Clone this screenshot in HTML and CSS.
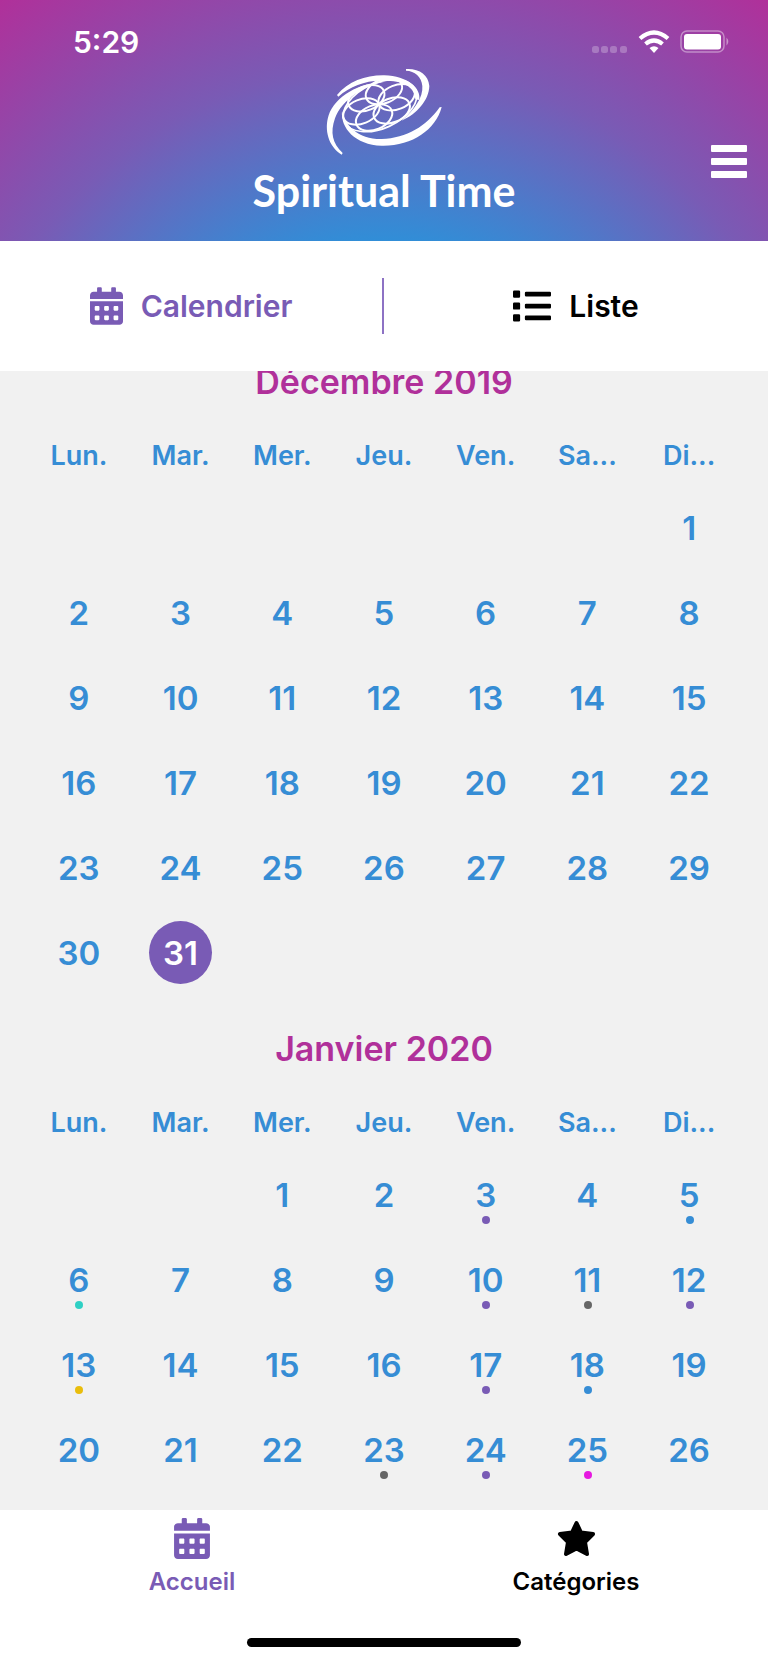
FILE: index.html
```html
<!DOCTYPE html>
<html lang="fr">
<head>
<meta charset="utf-8">
<meta name="viewport" content="width=device-width, initial-scale=1">
<title>Spiritual Time</title>
<link rel="stylesheet" href="styles.css">
</head>
<body>
<svg class="sprite" aria-hidden="true">
  <symbol id="calendar" viewBox="0 0 448 512"><path d="M0 464c0 26.500 21.500 48 48 48h352c26.500 0 48-21.500 48-48V192H0v272zm320-196c0-6.600 5.400-12 12-12h40c6.600 0 12 5.400 12 12v40c0 6.600-5.400 12-12 12h-40c-6.600 0-12-5.400-12-12v-40zm0 128c0-6.600 5.400-12 12-12h40c6.600 0 12 5.400 12 12v40c0 6.600-5.400 12-12 12h-40c-6.600 0-12-5.400-12-12v-40zM192 268c0-6.600 5.400-12 12-12h40c6.600 0 12 5.400 12 12v40c0 6.600-5.400 12-12 12h-40c-6.600 0-12-5.400-12-12v-40zm0 128c0-6.600 5.400-12 12-12h40c6.600 0 12 5.400 12 12v40c0 6.600-5.400 12-12 12h-40c-6.600 0-12-5.400-12-12v-40zM64 268c0-6.600 5.400-12 12-12h40c6.600 0 12 5.400 12 12v40c0 6.600-5.400 12-12 12H76c-6.600 0-12-5.400-12-12v-40zm0 128c0-6.600 5.400-12 12-12h40c6.600 0 12 5.400 12 12v40c0 6.600-5.400 12-12 12H76c-6.600 0-12-5.400-12-12v-40zM400 64h-48V16c0-8.800-7.200-16-16-16h-32c-8.800 0-16 7.200-16 16v48H160V16c0-8.800-7.200-16-16-16h-32c-8.800 0-16 7.200-16 16v48H48C21.500 64 0 85.500 0 112v48h448v-48c0-26.500-21.500-48-48-48z"/></symbol>
</svg>

<header class="header">
  <div class="status">
    <span class="clock">5:29</span>
    <svg class="status-icons" viewBox="0 0 138 24" aria-hidden="true">
      <g fill="#fff" fill-opacity=".25">
        <rect x="1" y="16" width="7" height="7" rx="2.500"/><rect x="10" y="16" width="7" height="7" rx="2.500"/><rect x="19" y="16" width="7" height="7" rx="2.500"/><rect x="29" y="16" width="7" height="7" rx="2.500"/>
      </g>
      <g fill="none" stroke="#fff" stroke-width="4.200">
        <path d="M49 8.500Q63 -3.500 77 8.500"/><path d="M54.500 14Q63 7 71.500 14"/>
      </g>
      <path d="M58.500 18Q63 14.500 67.500 18L63 23Z" fill="#fff"/>
      <rect x="90" y="1" width="43" height="21" rx="6" fill="none" stroke="#fff" stroke-opacity=".4" stroke-width="1.500"/>
      <rect x="93" y="4" width="37" height="15.500" rx="3" fill="#fff"/>
      <path d="M135.500 7.500q3.500 4 0 8z" fill="#fff" fill-opacity=".45"/>
    </svg>
  </div>
  <div class="brand">
    <svg class="logo" viewBox="42 22 354 264" aria-hidden="true">
      <g fill="#fff">
        <path d="M78 103C112 62 165 43 220 44C290 47 331 82 325 118L313 116C312 82 280 59 222 61C170 57 120 75 82 108Z"/>
        <path d="M285 25C325 23 352 42 355 76C354 118 318 160 272 180C310 148 337 110 334 76C332 48 311 31 285 30Z"/>
        <path d="M392 139C374 208 302 257 212 255C132 252 88 202 93 150C101 194 142 236 212 235C288 233 346 196 386 140Z"/>
        <path d="M222 63C162 72 92 117 72 173C57 215 64 249 95 277L92 282C52 258 39 207 53 164C72 106 145 66 222 63Z"/>
      </g>
      <g fill="none" stroke="#fff" stroke-width="5">
        <ellipse cx="207" cy="135" rx="117" ry="68" transform="rotate(-24 207 135)"/>
      </g>
      <g class="flower" transform="translate(204 131) rotate(-22) scale(114 72)" fill="none" stroke="#fff">
        <circle cx=".5" cy="0" r=".5"/><circle cx=".25" cy=".433" r=".5"/><circle cx="-.25" cy=".433" r=".5"/><circle cx="-.5" cy="0" r=".5"/><circle cx="-.25" cy="-.433" r=".5"/><circle cx=".25" cy="-.433" r=".5"/>
      </g>
    </svg>
    <h1 class="name">Spiritual Time</h1>
  </div>
  <button class="menu" aria-label="Menu"><span class="bar"></span><span class="bar"></span><span class="bar"></span></button>
</header>

<nav class="views">
  <button class="view active"><svg class="icon-cal"><use href="#calendar"/></svg>Calendrier</button>
  <button class="view"><svg class="icon-list" viewBox="0 0 512 512"><path d="M80 368H16a16 16 0 0 0-16 16v64a16 16 0 0 0 16 16h64a16 16 0 0 0 16-16v-64a16 16 0 0 0-16-16zm0-320H16A16 16 0 0 0 0 64v64a16 16 0 0 0 16 16h64a16 16 0 0 0 16-16V64a16 16 0 0 0-16-16zm0 160H16a16 16 0 0 0-16 16v64a16 16 0 0 0 16 16h64a16 16 0 0 0 16-16v-64a16 16 0 0 0-16-16zm416 176H176a16 16 0 0 0-16 16v32a16 16 0 0 0 16 16h320a16 16 0 0 0 16-16v-32a16 16 0 0 0-16-16zm0-320H176a16 16 0 0 0-16 16v32a16 16 0 0 0 16 16h320a16 16 0 0 0 16-16V80a16 16 0 0 0-16-16zm0 160H176a16 16 0 0 0-16 16v32a16 16 0 0 0 16 16h320a16 16 0 0 0 16-16v-32a16 16 0 0 0-16-16z"/></svg>Liste</button>
</nav>

<main class="calendar">
  <table class="month scrolled">
    <caption>Décembre 2019</caption>
    <thead><tr><th>Lun.</th><th>Mar.</th><th>Mer.</th><th>Jeu.</th><th>Ven.</th><th>Sa...</th><th>Di...</th></tr></thead>
    <tbody>
      <tr><td></td><td></td><td></td><td></td><td></td><td></td><td><button class="day">1</button></td></tr>
      <tr><td><button class="day">2</button></td><td><button class="day">3</button></td><td><button class="day">4</button></td><td><button class="day">5</button></td><td><button class="day">6</button></td><td><button class="day">7</button></td><td><button class="day">8</button></td></tr>
      <tr><td><button class="day">9</button></td><td><button class="day">10</button></td><td><button class="day">11</button></td><td><button class="day">12</button></td><td><button class="day">13</button></td><td><button class="day">14</button></td><td><button class="day">15</button></td></tr>
      <tr><td><button class="day">16</button></td><td><button class="day">17</button></td><td><button class="day">18</button></td><td><button class="day">19</button></td><td><button class="day">20</button></td><td><button class="day">21</button></td><td><button class="day">22</button></td></tr>
      <tr><td><button class="day">23</button></td><td><button class="day">24</button></td><td><button class="day">25</button></td><td><button class="day">26</button></td><td><button class="day">27</button></td><td><button class="day">28</button></td><td><button class="day">29</button></td></tr>
      <tr><td><button class="day">30</button></td><td><button class="day selected">31</button></td><td></td><td></td><td></td><td></td><td></td></tr>
    </tbody>
  </table>
  <table class="month">
    <caption>Janvier 2020</caption>
    <thead><tr><th>Lun.</th><th>Mar.</th><th>Mer.</th><th>Jeu.</th><th>Ven.</th><th>Sa...</th><th>Di...</th></tr></thead>
    <tbody>
      <tr><td></td><td></td><td><button class="day">1</button></td><td><button class="day">2</button></td><td><button class="day dot violet">3</button></td><td><button class="day">4</button></td><td><button class="day dot blue">5</button></td></tr>
      <tr><td><button class="day dot teal">6</button></td><td><button class="day">7</button></td><td><button class="day">8</button></td><td><button class="day">9</button></td><td><button class="day dot violet">10</button></td><td><button class="day dot gray">11</button></td><td><button class="day dot violet">12</button></td></tr>
      <tr><td><button class="day dot yellow">13</button></td><td><button class="day">14</button></td><td><button class="day">15</button></td><td><button class="day">16</button></td><td><button class="day dot violet">17</button></td><td><button class="day dot blue">18</button></td><td><button class="day">19</button></td></tr>
      <tr><td><button class="day">20</button></td><td><button class="day">21</button></td><td><button class="day">22</button></td><td><button class="day dot gray">23</button></td><td><button class="day dot violet">24</button></td><td><button class="day dot pink">25</button></td><td><button class="day">26</button></td></tr>
    </tbody>
  </table>
</main>

<footer class="footer">
  <nav class="tabs">
    <a class="tab active" href="#accueil"><svg class="tab-icon"><use href="#calendar"/></svg>Accueil</a>
    <a class="tab" href="#categories"><svg class="tab-icon" viewBox="0 0 36 41"><path d="M18.500 5L23 14.500L35 16L27 24L29 36L18.500 30.500L8 36L10 24L2 16L14 14.500Z" fill="currentColor" stroke="currentColor" stroke-width="4" stroke-linejoin="round"/></svg>Catégories</a>
  </nav>
  <div class="home-bar"></div>
</footer>
</body>
</html>
```
FILE: styles.css
```css
* { box-sizing: border-box; }

body {
  margin: 0;
  min-height: 100vh;
  display: flex;
  flex-direction: column;
  background: #fff;
  color: #000;
  font-family: Inter, "Liberation Sans", sans-serif;
}

button {
  margin: 0;
  padding: 0;
  border: 0;
  background: none;
  color: inherit;
  font: inherit;
}

svg { display: block; fill: currentColor; overflow: visible; }
.sprite { position: absolute; width: 0; height: 0; }

.header {
  position: relative;
  height: 241px;
  color: #fff;
  background: radial-gradient(circle at 50% 500px, #2f8fd8 255px, #795bb5 434px, #b0309a 630px);
}

.status {
  display: flex;
  justify-content: space-between;
  align-items: center;
  height: 66px;
  padding: 18px 39px 0 73px;
}
.clock { font-size: 30px; line-height: 48px; font-weight: 600; }
.status-icons { width: 138px; height: 24px; }

.brand { display: flex; flex-direction: column; align-items: center; padding-top: 2px; }
.logo { width: 118px; height: 88px; }
.flower circle { stroke-width: 2px; vector-effect: non-scaling-stroke; }
.name {
  margin: 10px 0 0;
  font-family: Lato, sans-serif;
  font-size: 43px;
  line-height: 50px;
  font-weight: 700;
}

.menu {
  position: absolute;
  right: 21px;
  top: 145px;
  display: flex;
  flex-direction: column;
  gap: 6px;
  width: 36px;
}
.bar { height: 7px; border-radius: 1px; background: #fff; }

.views {
  display: grid;
  grid-template-columns: 1fr 1fr;
  align-items: center;
  height: 130px;
}
.view {
  display: flex;
  align-items: center;
  justify-content: center;
  gap: 18px;
  height: 56px;
  font-size: 30px;
  line-height: 36px;
  font-weight: 600;
}
.view.active { border-right: 2px solid #8d72c4; }
.active { color: #795bb5; }
.icon-cal { width: 33px; height: 38px; }
.icon-list { width: 38px; height: 38px; }

.calendar {
  flex: 1;
  padding: 0 28px;
  overflow: hidden;
  background: #f1f1f1;
  color: #368dd5;
}
.month {
  width: 100%;
  table-layout: fixed;
  border-collapse: collapse;
}
.scrolled { margin-top: -43px; }
.month caption {
  padding: 34px 0 23px;
  color: #b0309a;
  font-size: 34px;
  line-height: 40px;
  font-weight: 600;
}
.month th {
  height: 60px;
  padding: 0;
  font-size: 27px;
  font-weight: 600;
  text-align: center;
}
.month td { height: 85px; padding: 0; }
.day {
  position: relative;
  display: block;
  width: 63px;
  height: 63px;
  margin: 0 auto;
  border-radius: 50%;
  font-size: 33px;
  font-weight: 600;
  text-align: center;
}
.selected { background: #795bb5; color: #fff; }
.dot::after {
  content: "";
  position: absolute;
  left: 28px;
  top: 53px;
  width: 8px;
  height: 8px;
  border-radius: 50%;
  background: currentColor;
}
.violet::after { background: #795bb5; }
.blue::after { background: #368dd5; }
.teal::after { background: #2fd0c4; }
.gray::after { background: #666; }
.yellow::after { background: #e9bd0c; }
.pink::after { background: #e619e0; }

.footer {
  display: flex;
  flex-direction: column;
  justify-content: space-between;
  align-items: center;
  height: 152px;
  padding: 8px 0 15px;
}
.tabs { display: grid; grid-template-columns: 1fr 1fr; width: 100%; }
.tab {
  display: flex;
  flex-direction: column;
  align-items: center;
  gap: 8px;
  font-size: 24px;
  line-height: 30px;
  font-weight: 600;
  text-decoration: none;
  color: #000;
}
.tab.active { color: #795bb5; }
.tab-icon { width: 36px; height: 41px; }
.home-bar { width: 274px; height: 9px; border-radius: 5px; background: #000; }
```
